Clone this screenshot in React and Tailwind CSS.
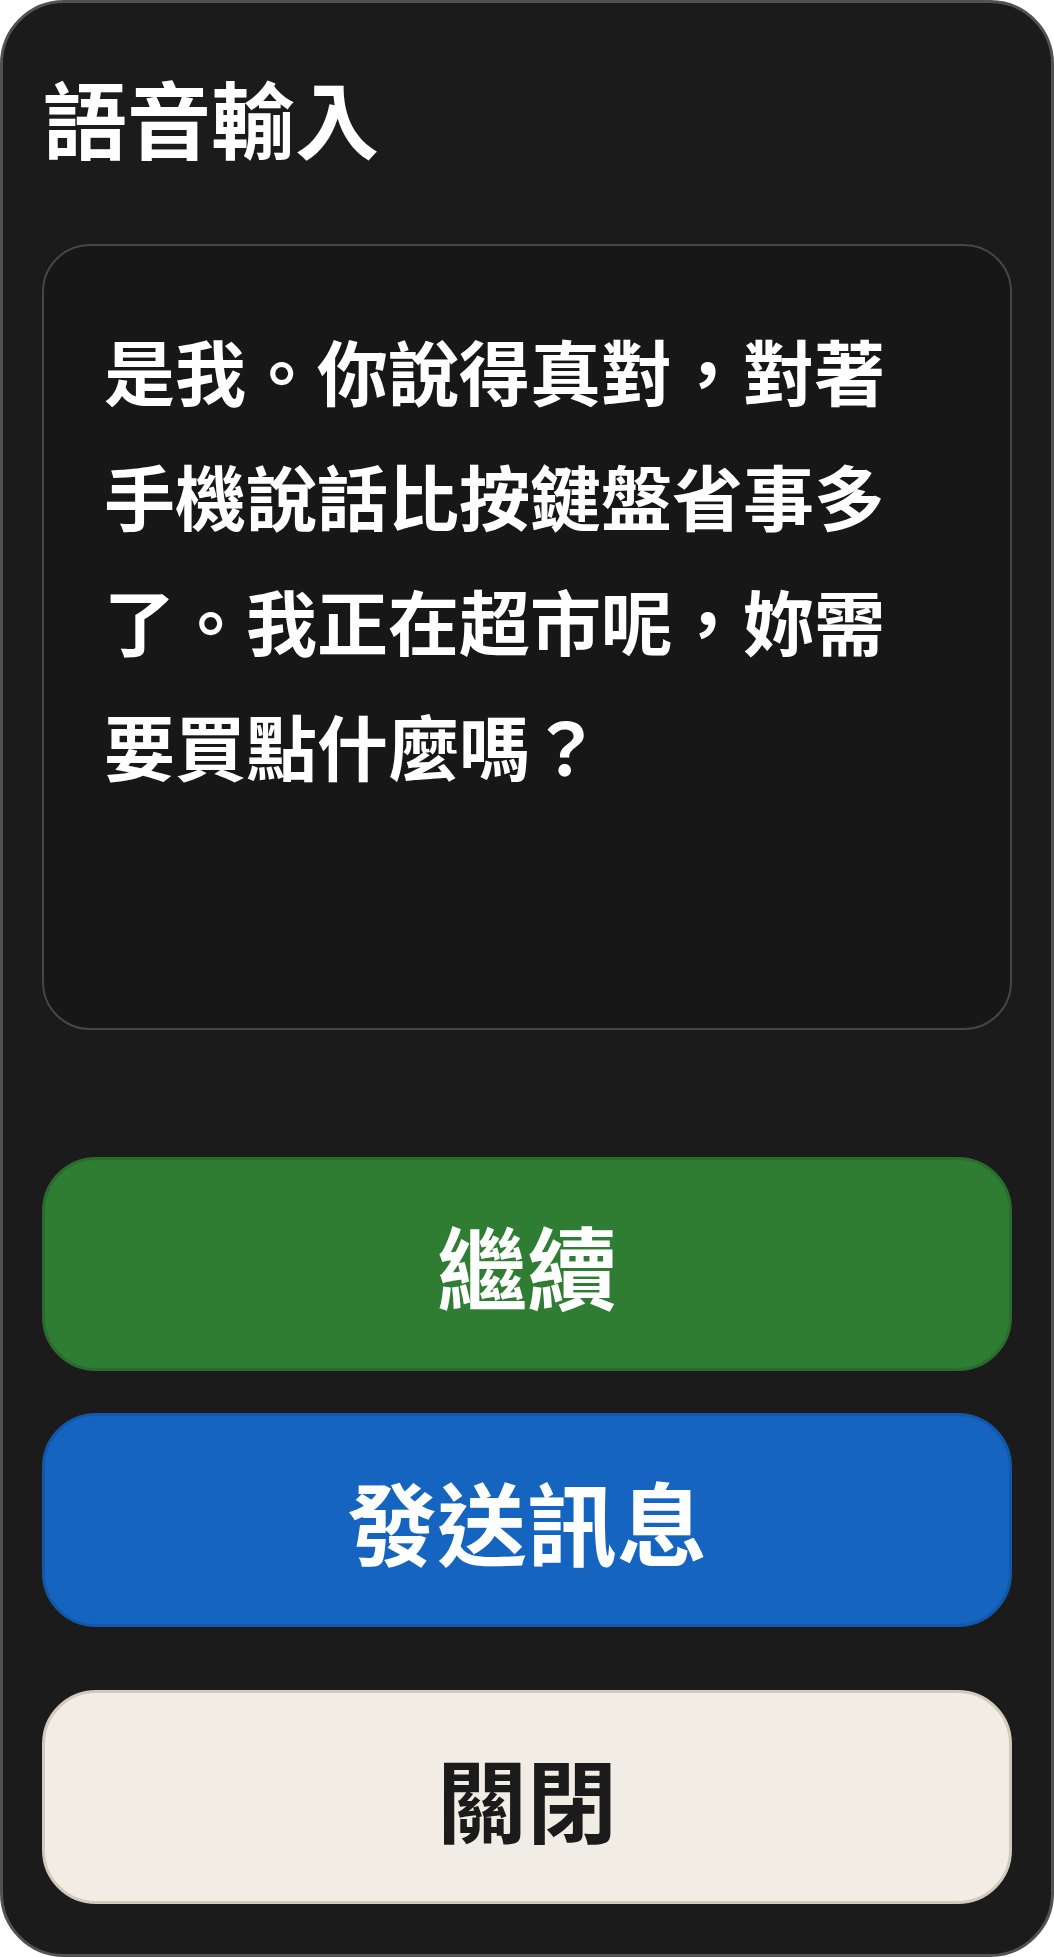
export default function App() {
  const font = { fontFamily: '"Noto Sans CJK TC", "Noto Sans CJK SC", "Noto Sans", sans-serif' };

  return (
    <div className="w-[1054px] h-[1957px]" style={font}>
      <div className="h-full flex flex-col bg-[#1b1b1b] border-[3px] border-[#525252] rounded-[64px] px-[39px] pt-[72px]">
        {/* 標題 */}
        <h1 className="text-[84px] leading-none font-bold text-white mb-[85px] pl-[1px]">語音輸入</h1>

        {/* 辨識結果 */}
        <div className="h-[786px] shrink-0 bg-[#171717] border-2 border-[#464646] rounded-[48px] px-[60px] pt-[61px]">
          <p className="text-[71px] leading-[125px] font-bold text-white">
            是我。你說得真對，對著手機說話比按鍵盤省事多了。我正在超市呢，妳需要買點什麼嗎？
          </p>
        </div>

        {/* 按鈕 */}
        <button className="mt-[127px] h-[214px] shrink-0 rounded-[54px] bg-[#2e7d32] border-[3px] border-[#2a6b2e] flex items-center justify-center text-[90px] font-bold text-white leading-none">
          繼續
        </button>
        <button className="mt-[42px] h-[214px] shrink-0 rounded-[54px] bg-[#1565c0] border-[3px] border-[#1257a8] flex items-center justify-center text-[90px] font-bold text-white leading-none">
          發送訊息
        </button>
        <button className="mt-[63px] h-[214px] shrink-0 rounded-[54px] bg-[#f1ece4] border-[3px] border-[#d2cabb] flex items-center justify-center text-[90px] font-bold text-[#1b1b1b] leading-none">
          關閉
        </button>
      </div>
    </div>
  );
}
